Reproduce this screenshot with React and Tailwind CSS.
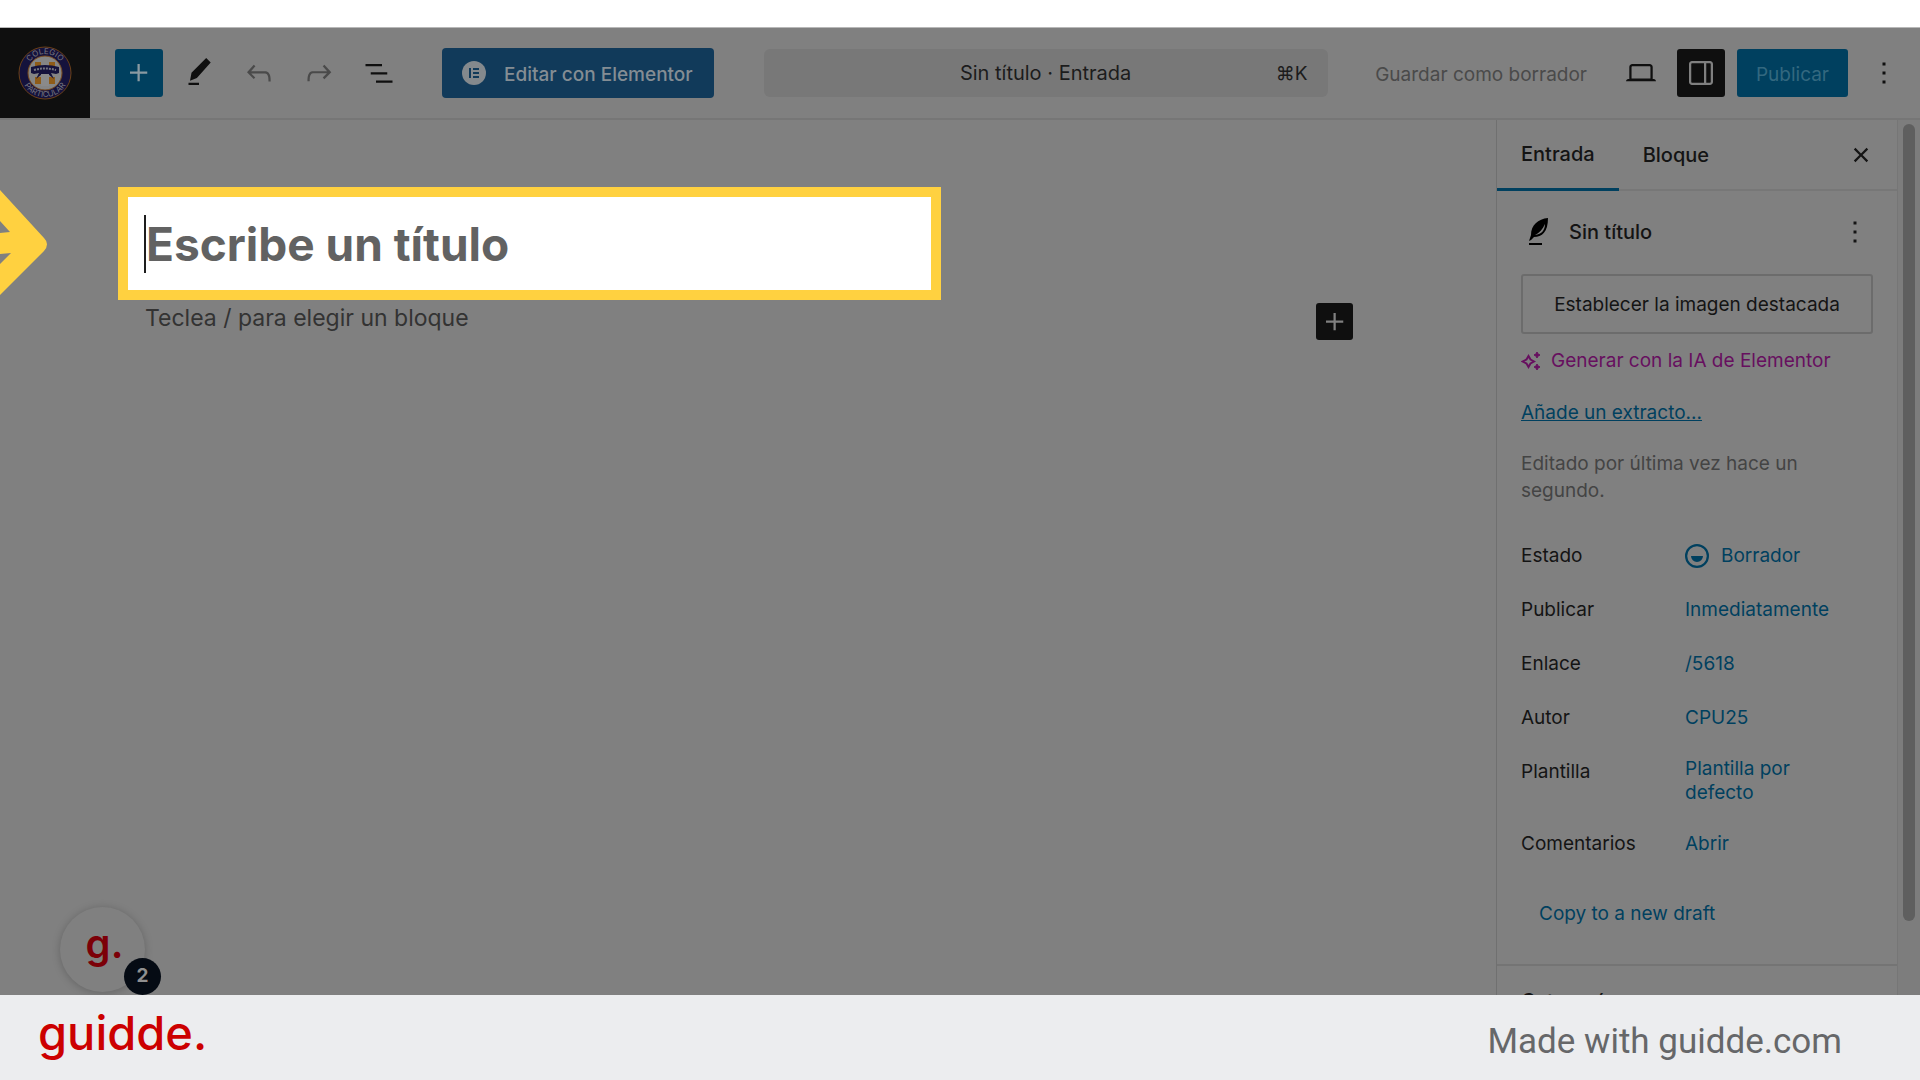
import React, { useState } from 'react';

const ICONS = {
  plus: 'M11 12.5V17.5H12.5V12.5H17.5V11H12.5V6H11V11H6V12.5H11Z',
  pencil: 'm19.8 5-3-3L7 11.8l-1 5.4 4.6-1.8L19.8 5ZM12 18.5H5V20h7v-1.5Z',
  undo: 'M18.3 11.7c-.6-.6-1.4-.9-2.3-.9H6.7l2.9-3.3-1.1-1-4.5 5L8.5 16l1-1-2.7-2.7H16c.5 0 .9.2 1.3.5 1 1 1 3.4 1 4.5v.3h1.5v-.2c0-1.5 0-4.3-1.5-5.7z',
  redo: 'M15.6 6.5l-1.1 1 2.9 3.3H8c-.9 0-1.7.3-2.3.9-1.4 1.5-1.4 4.2-1.4 5.6v.2h1.5v-.3c0-1.1 0-3.5 1-4.5.3-.3.7-.5 1.3-.5h9.2L14.5 15l1.1 1.1 4.6-4.6-4.6-5z',
  list: 'M3 6h11v1.5H3V6Zm3.5 5.5h11V13h-11v-1.5ZM21 17H10v1.5h11V17Z',
  laptop: 'M20.5 16h-.7V8c0-1.1-.9-2-2-2H6.2c-1.1 0-2 .9-2 2v8h-.7c-.8 0-1.5.7-1.5 1.5h20c0-.8-.7-1.5-1.5-1.5zM5.7 8c0-.3.2-.5.5-.5h11.6c.3 0 .5.2.5.5v7.6H5.7V8z',
  drawer: 'M18 4H6c-1.1 0-2 .9-2 2v12c0 1.1.9 2 2 2h12c1.1 0 2-.9 2-2V6c0-1.1-.9-2-2-2zm-4 14.5H6c-.3 0-.5-.2-.5-.5V6c0-.3.2-.5.5-.5h8v13zm4.5-.5c0 .3-.2.5-.5.5h-2.5v-13H18c.3 0 .5.2.5.5v12z',
  more: 'M13 19h-2v-2h2v2zm0-6h-2v-2h2v2zm0-6h-2V5h2v2z',
  close: 'M12 13.06l3.712 3.713 1.061-1.06L13.061 12l3.712-3.712-1.06-1.06L12 10.938 8.288 7.227l-1.061 1.06L10.939 12l-3.712 3.712 1.06 1.061L12 13.061z',
  draft: 'M12 18.5a6.5 6.5 0 1 1 0-13 6.5 6.5 0 0 1 0 13ZM4 12a8 8 0 1 1 16 0 8 8 0 0 1-16 0Zm8 4a4 4 0 0 0 4-4H8a4 4 0 0 0 4 4Z',
};

const SUMMARY_ROWS = [
  { label: 'Estado', value: 'Borrador', icon: 'draft' },
  { label: 'Publicar', value: 'Inmediatamente' },
  { label: 'Enlace', value: '/5618' },
  { label: 'Autor', value: 'CPU25' },
  { label: 'Plantilla', value: 'Plantilla por defecto' },
  { label: 'Comentarios', value: 'Abrir' },
];

function Icon({ name, className = 'size-9' }) {
  return (
    <svg viewBox="0 0 24 24" fill="currentColor" fillRule="evenodd" className={`shrink-0 ${className}`} aria-hidden="true">
      <path d={ICONS[name]} />
    </svg>
  );
}

function ToolButton({ icon, label, className = 'text-[#0f0f0f]' }) {
  return (
    <button type="button" aria-label={label} className={`flex size-12 shrink-0 items-center justify-center rounded-[3px] ${className}`}>
      <Icon name={icon} />
    </button>
  );
}

function SchoolCrest() {
  return (
    <svg viewBox="0 0 54 54" className="size-[54px]" role="img" aria-label="Colegio Particular">
      <defs>
        <path id="crest-top" d="M8 27a19 19 0 0 1 38 0" />
        <path id="crest-bottom" d="M3 27a24 24 0 0 0 48 0" />
      </defs>
      <circle cx="27" cy="27" r="26" fill="#15123c" stroke="#6b4018" />
      <circle cx="27" cy="27" r="17" fill="#858585" stroke="#7a4a1c" />
      <path d="M17 16h6v5h-6zM31 16h6v5h-6zM17 31h6v7h-6zM31 31h6v7h-6z" fill="#8f5c18" />
      <path d="M13 21q14-4 28 0v6l-3 1-5-1 3 6-6-5h-6l-6 5 3-6-5 1-3-1z" fill="#15123c" />
      <path d="M16 24q11-3 22 0" fill="none" stroke="#75757f" strokeWidth="2" strokeDasharray="2 1" />
      <path d="M23 28h8v12h-8z" fill="#8a8a8a" />
      <g fill="#77777f" fontFamily="Inter, sans-serif" fontSize="8">
        <text textAnchor="middle"><textPath href="#crest-top" startOffset="50%">COLEGIO</textPath></text>
        <text textAnchor="middle"><textPath href="#crest-bottom" startOffset="50%">PARTICULAR</textPath></text>
      </g>
    </svg>
  );
}

function TopBar() {
  return (
    <header className="flex h-[93px] shrink-0 items-center border-t border-b-2 border-t-[#b8b8b8] border-b-[#767676] pr-3">
      <a href="#inicio" className="flex w-[90px] shrink-0 items-center justify-center self-stretch bg-[#0f0f0f]">
        <SchoolCrest />
      </a>
      <div className="ml-[25px] flex gap-3">
        <ToolButton icon="plus" label="Añadir bloque" className="bg-[#00405f] text-[#8a9aa2]" />
        <ToolButton icon="pencil" label="Herramientas" />
        <ToolButton icon="undo" label="Deshacer" className="text-[#4a4a4a]" />
        <ToolButton icon="redo" label="Rehacer" className="text-[#4a4a4a]" />
        <ToolButton icon="list" label="Vista de lista" />
      </div>
      <button type="button" className="ml-[39px] flex h-[50px] w-[272px] shrink-0 items-center gap-[18px] rounded-[4px] bg-[#113a5a] pl-5 text-[19px] font-medium whitespace-nowrap text-[#848d94]">
        <svg viewBox="0 0 24 24" className="size-6 shrink-0" aria-hidden="true">
          <circle cx="12" cy="12" r="12" fill="#84898d" />
          <path d="M7 7h2v10H7zM11 7h6v2h-6zM11 11h6v2h-6zM11 15h6v2h-6z" fill="#113a5a" />
        </svg>
        <span className="pt-1">Editar con Elementor</span>
      </button>
      <div className="flex min-w-0 flex-1 justify-center pl-0.5">
        <button type="button" className="grid h-12 w-[564px] grid-cols-[1fr_auto_1fr] items-center rounded-[6px] bg-[#787878] px-5 text-[20px] text-[#1c1c1c]">
          <span className="col-start-2">Sin título · Entrada</span>
          <span className="justify-self-end pt-0.5 text-[19px]">⌘K</span>
        </button>
      </div>
      <div className="flex shrink-0 items-center gap-3">
        <button type="button" className="pt-1 text-[19px] text-[#4a4a4a]">Guardar como borrador</button>
        <div className="flex items-center gap-3 pl-[18px]">
          <ToolButton icon="laptop" label="Ver" />
          <ToolButton icon="drawer" label="Ajustes" className="bg-[#0f0f0f] text-[#808080]" />
          <button type="button" className="h-12 w-[111px] rounded-[3px] bg-[#00405f] pt-1 text-[19px] text-[#33687f]">Publicar</button>
          <ToolButton icon="more" label="Opciones" />
        </div>
      </div>
    </header>
  );
}

function Canvas() {
  const [title, setTitle] = useState('');

  return (
    <main className="relative flex min-w-0 flex-1 flex-col pt-[67px] pr-[143px] pl-[118px]">
      <div className="flex h-[113px] w-[823px] max-w-full items-center border-[10px] border-[#ffd140] bg-white pl-4">
        <span className="h-[58px] w-[2px] shrink-0 bg-[#1e1e1e]" />
        <input
          type="text"
          aria-label="Título"
          placeholder="Escribe un título"
          value={title}
          onChange={(e) => setTitle(e.target.value)}
          className="min-w-0 flex-1 text-[46px] leading-[58px] font-bold text-[#626262] outline-none placeholder:text-[#626262]"
        />
      </div>
      <div className="mt-[3px] flex justify-between pl-[27px]">
        <p className="text-[23px] leading-[30px] text-[#333333]">Teclea / para elegir un bloque</p>
        <button type="button" aria-label="Añadir bloque" className="flex size-[37px] items-center justify-center rounded-[3px] bg-[#0f0f0f] text-[#808080]">
          <Icon name="plus" />
        </button>
      </div>

      {/* pointer coming in from the left edge */}
      <svg viewBox="0 0 48 108" className="absolute top-[70px] left-0 h-[108px] w-12" aria-hidden="true">
        <path d="M0 0 44 48Q50 54 44 61L0 105V74L11 63 0 64V43L10 42 0 31Z" fill="#ffd140" />
      </svg>

      <div className="absolute bottom-[3px] left-[60px] flex size-[85px] items-center justify-center rounded-full bg-[#808080] pb-3 shadow-[0_1px_8px_rgba(0,0,0,0.22)]">
        <span className="pl-1 text-[40px] leading-[48px] font-semibold text-[#7c0008]">g.</span>
        <span className="absolute top-[51px] left-[64px] flex size-[37px] items-center justify-center rounded-full bg-[#050b14] text-[19px] font-bold text-[#909090]">2</span>
      </div>
    </main>
  );
}

function Sidebar() {
  return (
    <aside className="flex w-[424px] shrink-0 border-l border-[#707070] text-[19px] text-[#141414]">
      <div className="flex min-w-0 flex-1 flex-col border-r border-[#767676]">
        <div className="flex h-[71px] shrink-0 items-stretch border-b-2 border-[#777777] text-[20px] font-medium" role="tablist">
          <button type="button" role="tab" aria-selected="true" className="-mb-[2px] border-b-[3px] border-[#00405f] px-6">Entrada</button>
          <button type="button" role="tab" aria-selected="false" className="px-6">Bloque</button>
          <button type="button" aria-label="Cerrar" className="mr-[18px] ml-auto"><Icon name="close" /></button>
        </div>

        <div className="flex flex-col border-b-2 border-[#747474] px-6 pb-[26px]">
          <div className="mt-[17px] flex h-12 items-center">
            <svg viewBox="0 0 20 28" className="ml-2 h-7 w-5 shrink-0" aria-hidden="true">
              <path d="M19 0C9 1 2 7 2 17L0 23l2-1 3-3c8 0 14-5 14-19ZM6 17c4-2 8-6 10-11 0 6-3 10-10 11Z" fill="#000" fillRule="evenodd" />
              <path d="M0 25h13v2H0z" fill="#000" />
            </svg>
            <h2 className="ml-5 text-[20px] font-medium">Sin título</h2>
            <button type="button" aria-label="Acciones" className="ml-auto"><Icon name="more" /></button>
          </div>
          <button type="button" className="mt-[18px] h-[60px] rounded-[3px] border-2 border-[#6c6c6c] pt-0.5 whitespace-nowrap">Establecer la imagen destacada</button>
          <button type="button" className="mt-3 flex h-[30px] items-center gap-2.5 whitespace-nowrap text-[#670f5f]">
            <svg viewBox="0 0 20 20" className="size-5 shrink-0" aria-hidden="true">
              <path d="M7.500 5 9.500 8.500 13 10.500 9.500 12.500 7.500 16 5.500 12.500 1.500 10.500 5.500 8.500Z" fill="none" stroke="currentColor" strokeWidth="2" />
              <path d="m16 1 1 2 2 1-2 1-1 2-1-2-2-1 2-1zM16 13l1 2 2 1-2 1-1 2-1-2-2-1 2-1z" fill="currentColor" stroke="currentColor" />
            </svg>
            Generar con la IA de Elementor
          </button>
          <a href="#extracto" className="mt-[22px] self-start leading-[30px] text-[#00405f] underline">Añade un extracto...</a>
          <p className="mt-[22px] leading-[27px] text-[#444444]">Editado por última vez hace un segundo.</p>
          <dl className="mt-[28px] flex flex-col gap-1.5">
            {SUMMARY_ROWS.map((row) => (
              <div key={row.label} className="flex items-start">
                <dt className="w-[164px] shrink-0 leading-[48px]">{row.label}</dt>
                <dd className="flex min-h-12 min-w-0 items-center text-[#00405f]">
                  <button type="button" className="flex max-w-[150px] items-center gap-1.5 py-[9px] text-left leading-6">
                    {row.icon && <Icon name={row.icon} className="-my-1.5 -ml-1.5 size-9" />}
                    {row.value}
                  </button>
                </dd>
              </div>
            ))}
          </dl>
          <button type="button" className="mt-[22px] ml-[18px] h-12 self-start text-[#00405f]">Copy to a new draft</button>
        </div>
        <h2 className="px-6 pt-5 text-[20px] font-medium">Categorías</h2>
      </div>
      <div className="flex w-[22px] shrink-0 justify-center bg-[#7d7d7d] pt-1">
        <div className="h-[797px] w-3 rounded-full bg-[#5f5f5f]" />
      </div>
    </aside>
  );
}

export default function App() {
  return (
    <div className="flex h-screen flex-col overflow-hidden bg-white pt-[27px] font-[Inter,'Liberation_Sans',sans-serif]">
      <div className="flex min-h-0 flex-1 flex-col overflow-hidden bg-[#808080]">
        <TopBar />
        <div className="flex min-h-0 flex-1">
          <Canvas />
          <Sidebar />
        </div>
      </div>
      <footer className="flex h-[85px] shrink-0 items-center justify-between bg-[#ecedef] pr-[78px] pl-[38px]">
        <a href="#guidde" className="pb-2.5 text-[47px] leading-[58px] font-medium text-[#cc0000]">guidde.</a>
        <p className="pt-2 font-[Roboto] text-[35px] leading-[44px] text-[#666769]">Made with guidde.com</p>
      </footer>
    </div>
  );
}
